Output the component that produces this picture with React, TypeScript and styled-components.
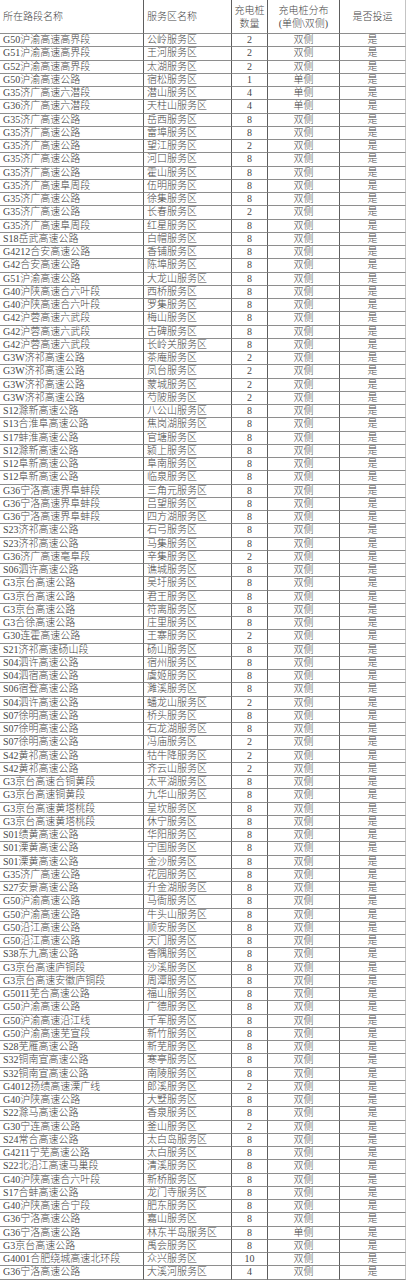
import styled, { createGlobalStyle } from "styled-components";

const GlobalStyle = createGlobalStyle`
  html, body {
    margin: 0;
    padding: 0;
    background: #ffffff;
  }
`;

type Align = "left" | "center";

type Station = [string, string, number, string];

const stations: Station[] = [
  ["G50沪渝高速高界段", "公岭服务区", 2, "双侧"],
  ["G51沪渝高速高界段", "王河服务区", 2, "双侧"],
  ["G52沪渝高速高界段", "太湖服务区", 2, "双侧"],
  ["G50沪渝高速公路", "宿松服务区", 1, "单侧"],
  ["G35济广高速六潜段", "潜山服务区", 4, "单侧"],
  ["G36济广高速六潜段", "天柱山服务区", 4, "单侧"],
  ["G35济广高速公路", "岳西服务区", 8, "双侧"],
  ["G35济广高速公路", "雷埠服务区", 8, "双侧"],
  ["G35济广高速公路", "望江服务区", 2, "双侧"],
  ["G35济广高速公路", "河口服务区", 8, "双侧"],
  ["G35济广高速公路", "霍山服务区", 8, "双侧"],
  ["G35济广高速阜周段", "伍明服务区", 8, "双侧"],
  ["G35济广高速公路", "徐集服务区", 8, "双侧"],
  ["G35济广高速公路", "长春服务区", 2, "双侧"],
  ["G35济广高速阜周段", "红星服务区", 8, "双侧"],
  ["S18岳武高速公路", "白帽服务区", 8, "双侧"],
  ["G4212合安高速公路", "香铺服务区", 8, "双侧"],
  ["G42合安高速公路", "陈埠服务区", 8, "双侧"],
  ["G51沪渝高速公路", "大龙山服务区", 8, "双侧"],
  ["G40沪陕高速合六叶段", "西桥服务区", 8, "双侧"],
  ["G40沪陕高速合六叶段", "罗集服务区", 8, "双侧"],
  ["G42沪蓉高速六武段", "梅山服务区", 8, "双侧"],
  ["G42沪蓉高速六武段", "古碑服务区", 8, "双侧"],
  ["G42沪蓉高速六武段", "长岭关服务区", 8, "双侧"],
  ["G3W济祁高速公路", "茶庵服务区", 2, "双侧"],
  ["G3W济祁高速公路", "凤台服务区", 2, "双侧"],
  ["G3W济祁高速公路", "蒙城服务区", 2, "双侧"],
  ["G3W济祁高速公路", "芍陂服务区", 2, "双侧"],
  ["S12滁新高速公路", "八公山服务区", 8, "双侧"],
  ["S13合淮阜高速公路", "焦岗湖服务区", 8, "双侧"],
  ["S17蚌淮高速公路", "官塘服务区", 8, "双侧"],
  ["S12滁新高速公路", "颍上服务区", 8, "双侧"],
  ["S12阜新高速公路", "阜南服务区", 8, "双侧"],
  ["S12阜新高速公路", "临泉服务区", 8, "双侧"],
  ["G36宁洛高速界阜蚌段", "三角元服务区", 8, "双侧"],
  ["G36宁洛高速界阜蚌段", "吕望服务区", 8, "双侧"],
  ["G36宁洛高速界阜蚌段", "四方湖服务区", 8, "双侧"],
  ["S23济祁高速公路", "石弓服务区", 8, "双侧"],
  ["S23济祁高速公路", "马集服务区", 8, "双侧"],
  ["G36济广高速亳阜段", "辛集服务区", 2, "双侧"],
  ["S06泗许高速公路", "谯城服务区", 8, "双侧"],
  ["G3京台高速公路", "吴圩服务区", 8, "双侧"],
  ["G3京台高速公路", "君王服务区", 8, "双侧"],
  ["G3京台高速公路", "符离服务区", 8, "双侧"],
  ["G3合徐高速公路", "庄里服务区", 8, "双侧"],
  ["G30连霍高速公路", "王寨服务区", 2, "双侧"],
  ["S21济祁高速砀山段", "砀山服务区", 8, "双侧"],
  ["S04泗许高速公路", "宿州服务区", 8, "双侧"],
  ["S04泗宿高速公路", "虞姬服务区", 8, "双侧"],
  ["S06宿登高速公路", "濉溪服务区", 8, "双侧"],
  ["S04泗许高速公路", "蟠龙山服务区", 2, "双侧"],
  ["S07徐明高速公路", "桥头服务区", 8, "双侧"],
  ["S07徐明高速公路", "石龙湖服务区", 8, "双侧"],
  ["S07徐明高速公路", "冯庙服务区", 2, "双侧"],
  ["S42黄祁高速公路", "牯牛降服务区", 2, "双侧"],
  ["S42黄祁高速公路", "齐云山服务区", 2, "双侧"],
  ["G3京台高速合铜黄段", "太平湖服务区", 8, "双侧"],
  ["G3京台高速铜黄段", "九华山服务区", 8, "双侧"],
  ["G3京台高速黄塔桃段", "呈坎服务区", 8, "双侧"],
  ["G3京台高速黄塔桃段", "休宁服务区", 8, "双侧"],
  ["S01绩黄高速公路", "华阳服务区", 8, "双侧"],
  ["S01溧黄高速公路", "宁国服务区", 8, "双侧"],
  ["S01溧黄高速公路", "金沙服务区", 8, "双侧"],
  ["G35济广高速公路", "花园服务区", 8, "双侧"],
  ["S27安景高速公路", "升金湖服务区", 8, "双侧"],
  ["G50沪渝高速公路", "马衙服务区", 8, "双侧"],
  ["G50沪渝高速公路", "牛头山服务区", 8, "双侧"],
  ["G50沿江高速公路", "顺安服务区", 8, "双侧"],
  ["G50沿江高速公路", "天门服务区", 8, "双侧"],
  ["S38东九高速公路", "香隅服务区", 8, "双侧"],
  ["G3京台高速庐铜段", "沙溪服务区", 8, "双侧"],
  ["G3京台高速安徽庐铜段", "周潭服务区", 8, "双侧"],
  ["G5011芜合高速公路", "福山服务区", 8, "双侧"],
  ["G50沪渝高速公路", "广德服务区", 8, "双侧"],
  ["G50沪渝高速沿江线", "千军服务区", 8, "双侧"],
  ["G50沪渝高速芜宣段", "新竹服务区", 8, "双侧"],
  ["S28芜雁高速公路", "新芜服务区", 8, "双侧"],
  ["S32铜南宣高速公路", "寒亭服务区", 8, "双侧"],
  ["S32铜南宣高速公路", "南陵服务区", 8, "双侧"],
  ["G4012扬绩高速溧广线", "郎溪服务区", 2, "双侧"],
  ["G40沪陕高速公路", "大墅服务区", 8, "双侧"],
  ["S22滁马高速公路", "香泉服务区", 8, "双侧"],
  ["G30宁连高速公路", "釜山服务区", 2, "双侧"],
  ["S24常合高速公路", "太白岛服务区", 8, "双侧"],
  ["G4211宁芜高速公路", "太白服务区", 8, "双侧"],
  ["S22北沿江高速马巢段", "清溪服务区", 8, "双侧"],
  ["G40沪陕高速合六叶段", "新桥服务区", 8, "双侧"],
  ["S17合蚌高速公路", "龙门寺服务区", 8, "双侧"],
  ["G40沪陕高速合宁段", "肥东服务区", 8, "双侧"],
  ["G36宁洛高速公路", "嘉山服务区", 8, "双侧"],
  ["G36宁洛高速公路", "林东半岛服务区", 8, "单侧"],
  ["G3京台高速公路", "禹会服务区", 8, "双侧"],
  ["G4001合肥绕城高速北环段", "众兴服务区", 10, "双侧"],
  ["G36宁洛高速公路", "大溪河服务区", 4, "双侧"],
];

const Sheet = styled.div`
  width: 406px;
  font-family: "Liberation Serif", "Noto Sans CJK SC", serif;
  font-size: 10px;
  font-weight: 300;
  color: #474747;
  background: #ffffff;
`;

const Row = styled.div<{ $header?: boolean }>`
  display: grid;
  grid-template-columns: 144px 88px 36px 72px 66px;
  height: ${(p) => (p.$header ? "34px" : "13.25px")};
`;

const Cell = styled.div<{ $align?: Align; $last?: boolean }>`
  box-sizing: border-box;
  display: flex;
  align-items: center;
  justify-content: ${(p) => (p.$align === "left" ? "flex-start" : "center")};
  padding-left: ${(p) => (p.$align === "left" ? "3px" : "0")};
  border-right: 1px solid ${(p) => (p.$last ? "#c4c4c4" : "#5e5e5e")};
  border-bottom: 1px solid #8e8e8e;
  white-space: nowrap;
  overflow: hidden;
  line-height: 1;
`;

const HeadText = styled.span`
  display: block;
  text-align: center;
  line-height: 13px;
`;

export default function App() {
  return (
    <>
      <GlobalStyle />
      <Sheet>
        <Row $header>
          <Cell $align="left">所在路段名称</Cell>
          <Cell $align="left">服务区名称</Cell>
          <Cell>
            <HeadText>
              充电桩
              <br />
              数量
            </HeadText>
          </Cell>
          <Cell>
            <HeadText>
              充电桩分布
              <br />
              (单侧\双侧)
            </HeadText>
          </Cell>
          <Cell $last>是否投运</Cell>
        </Row>
        {stations.map(([road, area, count, side], i) => (
          <Row key={i}>
            <Cell $align="left">{road}</Cell>
            <Cell $align="left">{area}</Cell>
            <Cell>{count}</Cell>
            <Cell>{side}</Cell>
            <Cell $last>是</Cell>
          </Row>
        ))}
      </Sheet>
    </>
  );
}
